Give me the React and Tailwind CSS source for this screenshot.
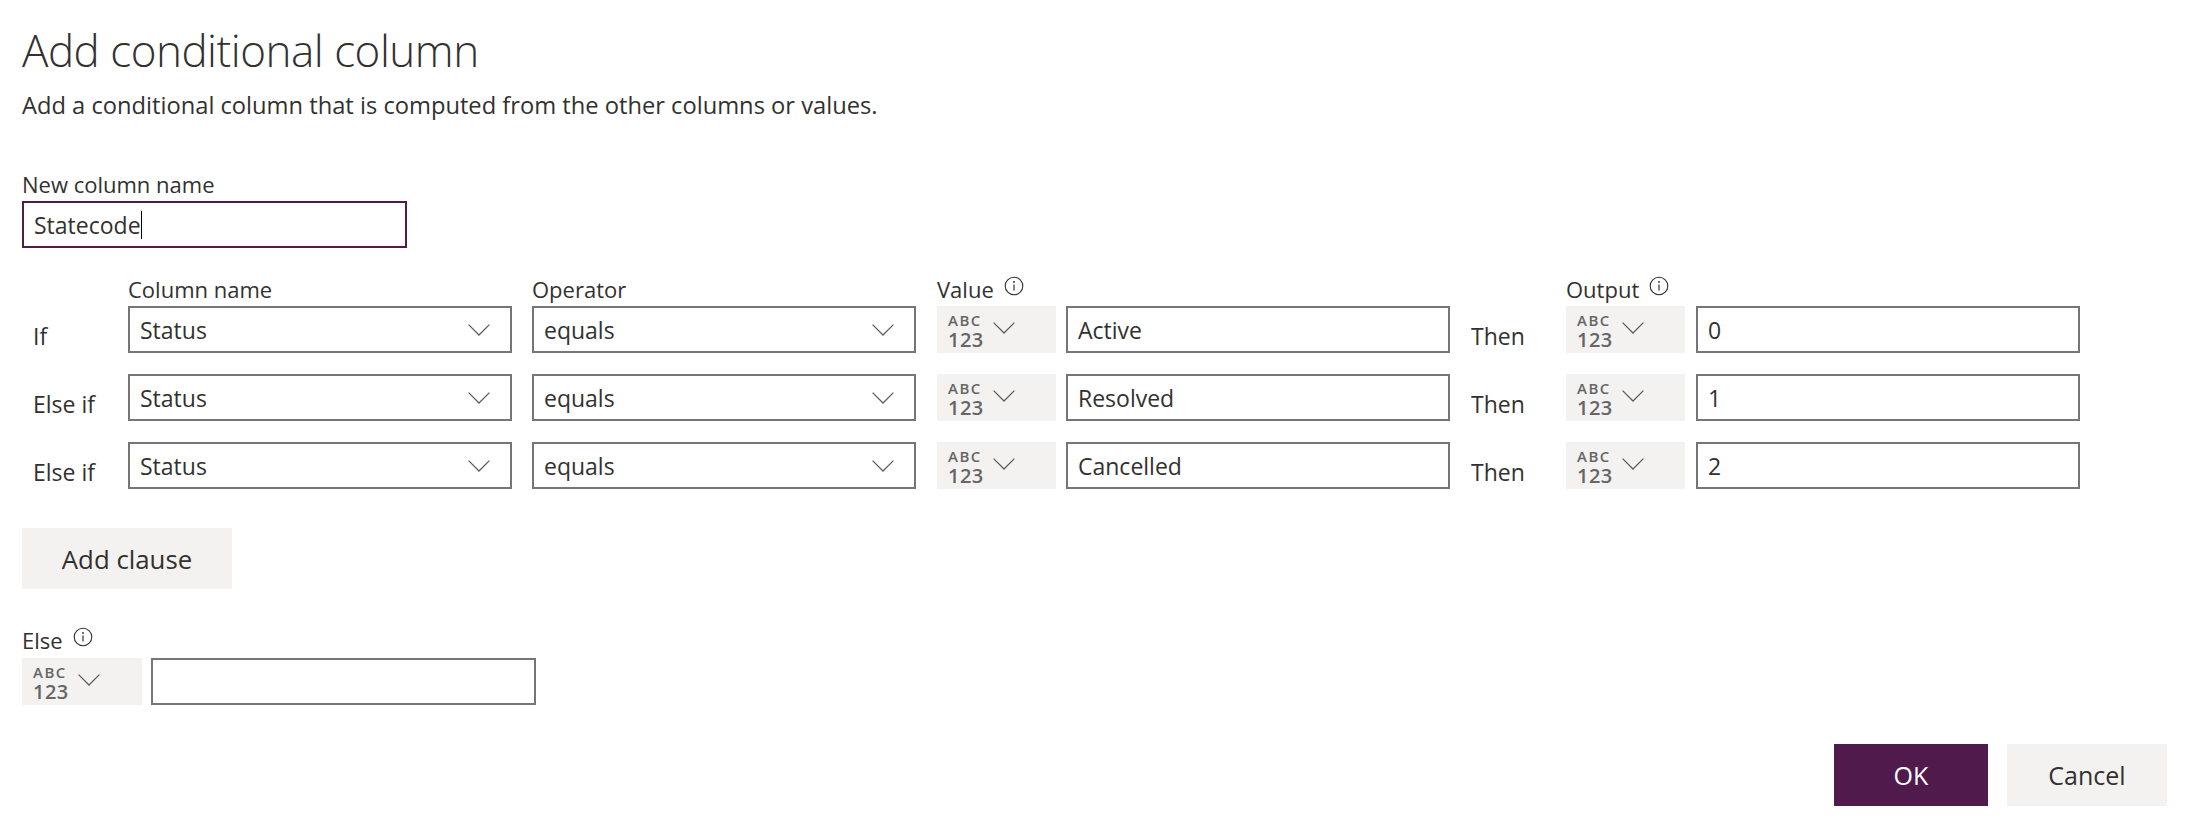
import React from "react";

function Chevron({ className = "" }) {
  return (
    <svg width="22" height="12" viewBox="0 0 22 12" className={className}>
      <polyline points="0.6,0.6 11,11 21.4,0.6" fill="none" stroke="#605e5c" strokeWidth="1.3" />
    </svg>
  );
}

function Info({ className = "" }) {
  return (
    <svg width="20" height="20" viewBox="0 0 20 20" className={className}>
      <circle cx="10" cy="10" r="8.8" fill="none" stroke="#323130" strokeWidth="1.1" />
      <line x1="10" y1="8.6" x2="10" y2="14.6" stroke="#323130" strokeWidth="1.2" />
      <circle cx="10" cy="6" r="0.95" fill="#323130" />
    </svg>
  );
}

function TypeBlock({ w = "w-[119px]", mr = "mr-[10px]" }) {
  return (
    <div className={`${w} ${mr} h-[47px] shrink-0 bg-[#f3f2f1] flex items-center pl-[11px]`}>
      <div className="flex flex-col pt-[3px] text-[#666666] font-semibold">
        <span className="text-[15px] leading-[17px] tracking-[1.5px]">ABC</span>
        <span className="text-[20px] leading-[21px] tracking-[0.5px]">123</span>
      </div>
      <Chevron className="ml-[9px] mb-[4px]" />
    </div>
  );
}

function Select({ value, mr }) {
  return (
    <div className={`w-[384px] ${mr} h-[47px] shrink-0 border-2 border-[#767676] flex items-center justify-between pl-[10px] pr-[20px] text-[23px] leading-[30px]`}>
      <span>{value}</span>
      <Chevron />
    </div>
  );
}

function TextBox({ value, w = "w-[384px]" }) {
  return (
    <div className={`${w} h-[47px] shrink-0 border-2 border-[#767676] flex items-center pl-[10px] text-[23px] leading-[30px]`}>
      {value}
    </div>
  );
}

function Row({ label, value, output }) {
  return (
    <div className="flex h-[47px]">
      <div className="w-[106px] shrink-0 pl-[11px] pt-[12px] flex items-center text-[23px] leading-[30px]">{label}</div>
      <Select value="Status" mr="mr-[20px]" />
      <Select value="equals" mr="mr-[21px]" />
      <TypeBlock />
      <TextBox value={value} />
      <div className="w-[116px] shrink-0 pl-[21px] pt-[13px] flex items-center text-[23px] leading-[30px]">Then</div>
      <TypeBlock mr="mr-[11px]" />
      <TextBox value={output} />
    </div>
  );
}

export default function App() {
  return (
    <div className="w-[2188px] h-[838px] bg-white pl-[22px] pr-[21px] pt-[20px] flex flex-col text-[#323130] font-['Open_Sans','Noto_Sans','Liberation_Sans',sans-serif]">
      <h1 className="text-[44px] font-light leading-[60px] tracking-[-0.5px]">Add conditional column</h1>
      <p className="mt-[9px] text-[23.7px] leading-[32px]">
        Add a conditional column that is computed from the other columns or values.
      </p>

      <div className="mt-[49px] text-[22px] leading-[28px]">New column name</div>
      <div className="mt-[3px] w-[385px] h-[47px] border-2 border-[#4f1c4c] flex items-center pl-[10px] text-[23px] leading-[30px]">
        <span>Statecode</span>
        <span className="inline-block w-px h-[28px] bg-black" />
      </div>

      <div className="mt-[27px] flex text-[22px] leading-[28px]">
        <div className="w-[106px] shrink-0" />
        <div className="w-[404px] shrink-0">Column name</div>
        <div className="w-[405px] shrink-0">Operator</div>
        <div className="w-[629px] shrink-0 flex items-center">
          <span>Value</span>
          <Info className="ml-[10px] mb-[6px]" />
        </div>
        <div className="flex items-center">
          <span>Output</span>
          <Info className="ml-[10px] mb-[6px]" />
        </div>
      </div>

      <div className="mt-[3px] flex flex-col gap-[21px]">
        <Row label="If" value="Active" output="0" />
        <Row label="Else if" value="Resolved" output="1" />
        <Row label="Else if" value="Cancelled" output="2" />
      </div>

      <button className="mt-[39px] w-[210px] h-[61px] bg-[#f3f2f1] flex items-center justify-center text-[25.8px] leading-[32px]">
        Add clause
      </button>

      <div className="mt-[37px] flex items-center text-[22px] leading-[28px]">
        <span>Else</span>
        <Info className="ml-[10px] mb-[6px]" />
      </div>
      <div className="mt-[4px] flex h-[47px]">
        <TypeBlock w="w-[120px]" mr="mr-[9px]" />
        <TextBox value="" w="w-[385px]" />
      </div>

      <div className="mt-[39px] flex justify-end gap-[19px]">
        <button className="w-[154px] h-[62px] bg-[#511a4d] text-white flex items-center justify-center text-[25px] leading-[32px]">
          OK
        </button>
        <button className="w-[160px] h-[62px] bg-[#f3f2f1] flex items-center justify-center text-[25px] leading-[32px]">
          Cancel
        </button>
      </div>
    </div>
  );
}
